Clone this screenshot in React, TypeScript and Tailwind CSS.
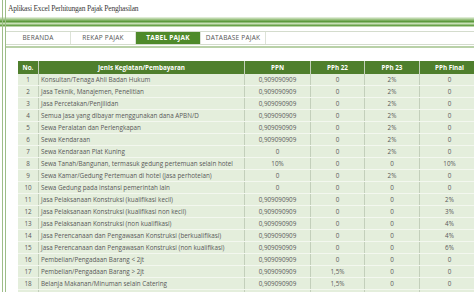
import React from 'react';

type Row = [string, string, string, string, string];

const rows: Row[] = [
  ['Konsultan/Tenaga Ahli Badan Hukum', '0,909090909', '0', '2%', '0'],
  ['Jasa Teknik, Manajemen, Penelitian', '0,909090909', '0', '2%', '0'],
  ['Jasa Percetakan/Penjilidan', '0,909090909', '0', '2%', '0'],
  ['Semua Jasa yang dibayar menggunakan dana APBN/D', '0,909090909', '0', '2%', '0'],
  ['Sewa Peralatan dan Perlengkapan', '0,909090909', '0', '2%', '0'],
  ['Sewa Kendaraan', '0,909090909', '0', '2%', '0'],
  ['Sewa Kendaraan Plat Kuning', '0', '0', '2%', '0'],
  ['Sewa Tanah/Bangunan, termasuk gedung pertemuan selain hotel', '10%', '0', '0', '10%'],
  ['Sewa Kamar/Gedung Pertemuan di hotel (jasa perhotelan)', '0', '0', '2%', '0'],
  ['Sewa Gedung pada instansi pemerintah lain', '0', '0', '0', '0'],
  ['Jasa Pelaksanaan Konstruksi (kualifikasi kecil)', '0,909090909', '0', '0', '2%'],
  ['Jasa Pelaksanaan Konstruksi (kualifikasi non kecil)', '0,909090909', '0', '0', '3%'],
  ['Jasa Pelaksanaan Konstruksi (non kualifikasi)', '0,909090909', '0', '0', '4%'],
  ['Jasa Perencanaan dan Pengawasan Konstruksi (berkualifikasi)', '0,909090909', '0', '0', '4%'],
  ['Jasa Perencanaan dan Pengawasan Konstruksi (non kualifikasi)', '0,909090909', '0', '0', '6%'],
  ['Pembelian/Pengadaan Barang < 2jt', '0,909090909', '0', '0', '0'],
  ['Pembelian/Pengadaan Barang > 2jt', '0,909090909', '1,5%', '0', '0'],
  ['Belanja Makanan/Minuman selain Catering', '0,909090909', '1,5%', '0', '0'],
];

const tabs = ['BERANDA', 'REKAP PAJAK', 'TABEL PAJAK', 'DATABASE PAJAK'];

function Cell({ w, children, left }: { w: string; children?: React.ReactNode; left?: boolean }) {
  return (
    <div
      className={`${w} shrink-0 border-r border-[#c3cfbb] flex items-center ${left ? 'justify-start pl-[2px]' : 'justify-center'} whitespace-nowrap overflow-hidden`}
    >
      {children}
    </div>
  );
}

export default function App() {
  return (
    <div className="relative w-[474px] h-[292px] overflow-hidden bg-white" style={{ fontFamily: '"Open Sans", "Liberation Sans", sans-serif' }}>
      {/* frame lines */}
      <div className="absolute left-[2px] top-0 h-full w-[1px] bg-[#9dbd88]" />
      <div className="absolute left-[5px] top-0 h-full w-[1px] bg-[#9dbd88]" />

      <div className="h-[17px] pl-[8px] flex items-center text-[7.5px] tracking-[-0.2px] text-[#3a3a3a]" style={{ fontFamily: '"Liberation Serif", serif' }}>
        Aplikasi Excel Perhitungan Pajak Penghasilan
      </div>

      <div className="h-[10px] bg-[linear-gradient(to_bottom,#eef5e8_0%,#9cc383_25%,#5c9a3c_45%,#c9e0b8_65%,#6aa34a_85%,#dfeed4_100%)]" />

      <div className="mt-[4px] ml-[6px] h-[14px] flex bg-white border-y border-[#d4dccd]">
        {tabs.map((t) => (
          <div
            key={t}
            className={`w-[65px] shrink-0 flex items-center justify-center text-[6.5px] tracking-[0.2px] border-r border-[#dde3d8] ${
              t === 'TABEL PAJAK' ? 'bg-[#4f8a2b] text-white font-bold' : 'text-[#555]'
            }`}
          >
            {t}
          </div>
        ))}
      </div>
      <div className="ml-[6px] mt-[1px] h-[2px] bg-[#b9d1a8]" />

      <div className="ml-[18px] mt-[13px] text-[6.3px]">
        <div className="flex h-[13px] bg-[#4f7f2d] text-white font-bold">
          <Cell w="w-[21px]">No.</Cell>
          <Cell w="w-[206px]">Jenis Kegiatan/Pembayaran</Cell>
          <Cell w="w-[66px]">PPN</Cell>
          <Cell w="w-[54px]">PPh 22</Cell>
          <Cell w="w-[55px]">PPh 23</Cell>
          <Cell w="w-[60px]">PPh Final</Cell>
        </div>
        {rows.map((r, i) => (
          <div key={i} className="flex h-[12px] bg-[#e4eedc] border-b border-[#f3f7ef] text-[#595959]">
            <Cell w="w-[21px]">{i + 1}</Cell>
            <Cell w="w-[206px]" left>
              {r[0]}
            </Cell>
            <Cell w="w-[66px]">{r[1]}</Cell>
            <Cell w="w-[54px]">{r[2]}</Cell>
            <Cell w="w-[55px]">{r[3]}</Cell>
            <Cell w="w-[60px]">{r[4]}</Cell>
          </div>
        ))}
        <div className="flex h-[12px] bg-[#e4eedc]">
          <Cell w="w-[21px]" />
          <Cell w="w-[206px]" />
          <Cell w="w-[66px]" />
          <Cell w="w-[54px]" />
          <Cell w="w-[55px]" />
          <Cell w="w-[60px]" />
        </div>
      </div>
    </div>
  );
}
